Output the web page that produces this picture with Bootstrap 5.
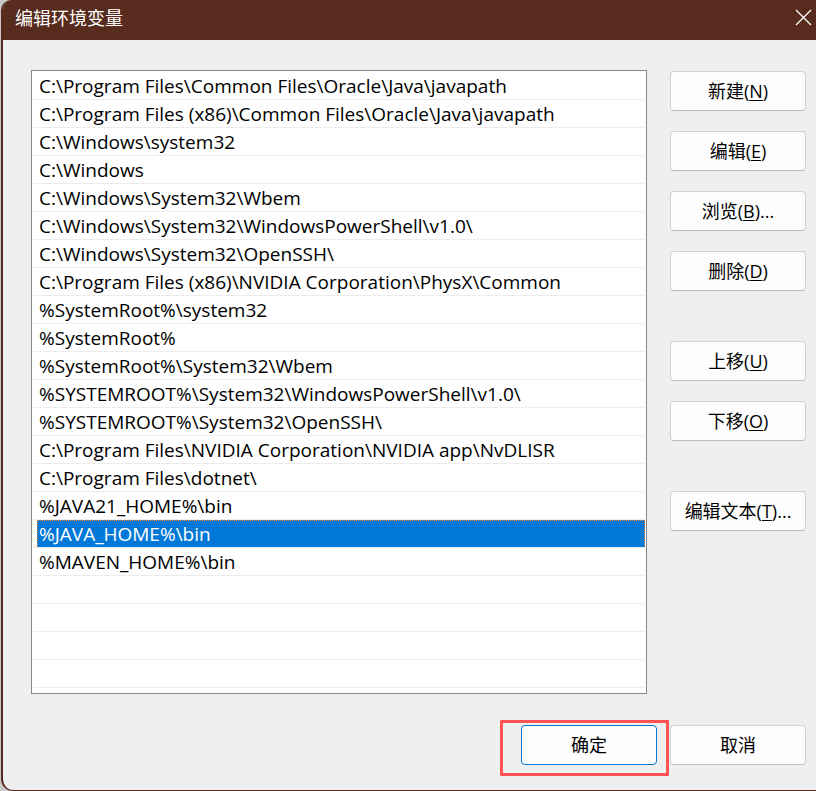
<!DOCTYPE html>
<html lang="zh-CN">
<head>
<meta charset="utf-8">
<meta name="viewport" content="width=device-width, initial-scale=1">
<title>编辑环境变量</title>
<link href="https://cdn.jsdelivr.net/npm/bootstrap@5.3.0/dist/css/bootstrap.min.css" rel="stylesheet">
<style>
  :root { --frame: #572b1d; --face: #efefef; }
  body { background: #c9c9c9; font-family: "Open Sans", "Noto Sans CJK SC", sans-serif; font-size: 18px; line-height: 28px; color: #000; padding-left: 1px; }
  .dialog { background: var(--face); border: solid var(--frame); border-width: 0 0 1px 2px; border-radius: 10px 0 0 12px; overflow: hidden; }
  .titlebar { background: var(--frame); color: #fff; height: 40px; padding: 0 4px 5px 12px; }
  .titlebar h1 { font-size: 18px; line-height: 28px; }
  .close-btn { color: #fff; line-height: 0; }
  .content { padding: 30px 10px 0 28px; gap: 23px; }
  .path-list { background: #fff; border: 1px solid #828790; padding: 1px 1px 5px; min-width: 0; }
  .path-row { height: 28px; border-bottom: 1px solid #ededed; padding-left: 4px; }
  .path-row button { display: block; width: 100%; height: 27px; border: 1px solid transparent; background: none; color: #000; text-align: left; padding: 2px 0 0 1px; line-height: 23px; font-size: 19px; white-space: nowrap; overflow: hidden; }
  .path-row button[aria-selected="true"] { background: #0078d7; color: #fff; border: 1px dotted #ff8728; border-bottom-color: #0078d7; }
  .side { width: 136px; padding-top: 1px; gap: 50px; }
  .group { gap: 20px; }
  .push { width: 136px; height: 40px; padding: 0; font-size: 18px; line-height: 28px; color: #000; background: #fdfdfd; border: 1px solid #d0d0d0; border-bottom-color: #bababa; border-radius: 4px; }
  .push:hover { background: #e0eef9; border-color: #0078d4; color: #000; }
  .push u { text-underline-offset: 2px; text-decoration-thickness: 1px; }
  .push-default { border-color: #0078d4; }
  .actions { padding: 31px 10px 25px; gap: 13px; }
  .highlight-frame { position: absolute; inset: -5px -12px -11px -21px; border: 3px solid #ff5252; border-radius: 1px; pointer-events: none; }
</style>
</head>
<body>
<main class="dialog min-vh-100 d-flex flex-column" role="dialog" aria-labelledby="dialog-title">
  <header class="titlebar d-flex align-items-center justify-content-between">
    <h1 id="dialog-title" class="m-0 fw-normal">编辑环境变量</h1>
    <button type="button" class="close-btn btn p-0 border-0" aria-label="关闭">
      <svg width="17" height="17" viewBox="0 0 17 17" fill="none" stroke="currentColor" stroke-width="1.3"><path d="M1 1 16 16M16 1 1 16"/></svg>
    </button>
  </header>

  <div class="content d-flex">
    <div class="path-list flex-grow-1" role="listbox" aria-label="路径">
      <div class="path-row"><button type="button" role="option">C:\Program Files\Common Files\Oracle\Java\javapath</button></div>
      <div class="path-row"><button type="button" role="option">C:\Program Files (x86)\Common Files\Oracle\Java\javapath</button></div>
      <div class="path-row"><button type="button" role="option">C:\Windows\system32</button></div>
      <div class="path-row"><button type="button" role="option">C:\Windows</button></div>
      <div class="path-row"><button type="button" role="option">C:\Windows\System32\Wbem</button></div>
      <div class="path-row"><button type="button" role="option">C:\Windows\System32\WindowsPowerShell\v1.0\</button></div>
      <div class="path-row"><button type="button" role="option">C:\Windows\System32\OpenSSH\</button></div>
      <div class="path-row"><button type="button" role="option">C:\Program Files (x86)\NVIDIA Corporation\PhysX\Common</button></div>
      <div class="path-row"><button type="button" role="option">%SystemRoot%\system32</button></div>
      <div class="path-row"><button type="button" role="option">%SystemRoot%</button></div>
      <div class="path-row"><button type="button" role="option">%SystemRoot%\System32\Wbem</button></div>
      <div class="path-row"><button type="button" role="option">%SYSTEMROOT%\System32\WindowsPowerShell\v1.0\</button></div>
      <div class="path-row"><button type="button" role="option">%SYSTEMROOT%\System32\OpenSSH\</button></div>
      <div class="path-row"><button type="button" role="option">C:\Program Files\NVIDIA Corporation\NVIDIA app\NvDLISR</button></div>
      <div class="path-row"><button type="button" role="option">C:\Program Files\dotnet\</button></div>
      <div class="path-row"><button type="button" role="option">%JAVA21_HOME%\bin</button></div>
      <div class="path-row"><button type="button" role="option" aria-selected="true">%JAVA_HOME%\bin</button></div>
      <div class="path-row"><button type="button" role="option">%MAVEN_HOME%\bin</button></div>
      <div class="path-row"></div>
      <div class="path-row"></div>
      <div class="path-row"></div>
      <div class="path-row"></div>
    </div>

    <div class="side d-flex flex-column flex-shrink-0">
      <div class="group d-flex flex-column">
        <button type="button" class="btn push">新建(<u>N</u>)</button>
        <button type="button" class="btn push">编辑(<u>E</u>)</button>
        <button type="button" class="btn push">浏览(<u>B</u>)...</button>
        <button type="button" class="btn push">删除(<u>D</u>)</button>
      </div>
      <div class="group d-flex flex-column">
        <button type="button" class="btn push">上移(<u>U</u>)</button>
        <button type="button" class="btn push">下移(<u>O</u>)</button>
      </div>
      <div class="group d-flex flex-column">
        <button type="button" class="btn push">编辑文本(<u>T</u>)...</button>
      </div>
    </div>
  </div>

  <footer class="actions d-flex justify-content-end">
    <div class="position-relative">
      <button type="button" class="btn push push-default">确定</button>
      <span class="highlight-frame"></span>
    </div>
    <button type="button" class="btn push">取消</button>
  </footer>
</main>
<script src="https://cdn.jsdelivr.net/npm/bootstrap@5.3.0/dist/js/bootstrap.bundle.min.js"></script>
</body>
</html>
